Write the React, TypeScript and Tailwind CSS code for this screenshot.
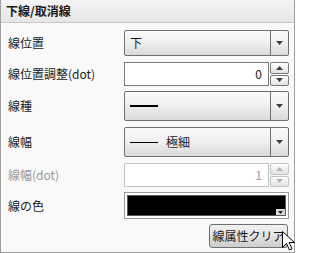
import React from "react";

const font = { fontFamily: '"Noto Sans CJK JP", "Noto Sans", sans-serif' };

function Arrow({ light = false, up = false }: { light?: boolean; up?: boolean }) {
  return (
    <svg width="7" height="4" viewBox="0 0 7 4" className={up ? "rotate-180" : ""}>
      <path d="M0 0h7L3.5 4z" fill={light ? "#b4b4b4" : "#3c3c3c"} />
    </svg>
  );
}

function Select({ h, children }: { h: string; children?: React.ReactNode }) {
  return (
    <div
      className={`flex w-[165px] ${h} rounded-[2px] border border-[#707070] bg-gradient-to-b from-[#fafafa] via-[#efefef] to-[#d9d9d9]`}
    >
      <div className="flex flex-1 items-center gap-[8px] px-[5px] text-[12px] text-[#1a1a1a]">{children}</div>
      <div className="flex w-[18px] items-center justify-center border-l border-[#707070]">
        <Arrow />
      </div>
    </div>
  );
}

function Spin({ value, disabled = false }: { value: string; disabled?: boolean }) {
  const border = disabled ? "border-[#c4c4c4]" : "border-[#7a7a7a]";
  return (
    <div className="flex h-[24px] w-[165px] gap-[1px]">
      <div
        className={`flex flex-1 items-center justify-end border ${border} bg-white pr-[6px] text-[12px] ${
          disabled ? "text-[#9a9a9a]" : "text-[#1a1a1a]"
        }`}
      >
        {value}
      </div>
      <div className="flex w-[19px] flex-col gap-[1px]">
        <div
          className={`flex flex-1 items-center justify-center rounded-[2px] border ${border} bg-gradient-to-b from-white to-[#e2e2e2]`}
        >
          <Arrow light={disabled} up />
        </div>
        <div
          className={`flex flex-1 items-center justify-center rounded-[2px] border ${border} bg-gradient-to-b from-white to-[#e2e2e2]`}
        >
          <Arrow light={disabled} />
        </div>
      </div>
    </div>
  );
}

function Row({ label, disabled = false, mt, children }: { label: string; disabled?: boolean; mt: string; children: React.ReactNode }) {
  return (
    <div className={`flex items-center ${mt}`}>
      <div className={`w-[116px] text-[12px] leading-none ${disabled ? "text-[#9a9a9a]" : "text-[#1a1a1a]"}`}>{label}</div>
      {children}
    </div>
  );
}

export default function App() {
  return (
    <div className="relative h-[253px] w-[297px] bg-white" style={font}>
      <div className="flex h-[253px] w-[295px] flex-col border border-t-0 border-[#a0a0a0] bg-[#f8f9f8]">
        <div className="flex h-[23px] items-center border-b border-[#c8c8c8] bg-gradient-to-b from-[#f4f4f4] to-[#e6e6e6] pl-[5px] text-[12px] font-bold text-[#1a1a1a]">
          下線/取消線
        </div>
        <div className="flex flex-col pl-[7px]">
          <Row label="線位置" mt="mt-[7px]">
            <Select h="h-[26px]">
              <span>下</span>
            </Select>
          </Row>
          <Row label="線位置調整(dot)" mt="mt-[6px]">
            <Spin value="0" />
          </Row>
          <Row label="線種" mt="mt-[5px]">
            <Select h="h-[30px]">
              <span className="h-[2px] w-[28px] bg-black" />
            </Select>
          </Row>
          <Row label="線幅" mt="mt-[6px]">
            <Select h="h-[30px]">
              <span className="h-[1px] w-[28px] bg-black" />
              <span>極細</span>
            </Select>
          </Row>
          <Row label="線幅(dot)" disabled mt="mt-[6px]">
            <Spin value="1" disabled />
          </Row>
          <Row label="線の色" mt="mt-[5px]">
            <div className="h-[27px] w-[165px] border border-[#9a9a9a] bg-white p-[2px]">
              <div className="relative h-full w-full border border-[#5a5a5a] bg-black">
                <div className="absolute bottom-0 right-0 flex h-[6px] w-[9px] items-center justify-center bg-[#d8d8d8]">
                  <svg width="5" height="3" viewBox="0 0 5 3">
                    <path d="M0 0h5L2.5 3z" fill="#222" />
                  </svg>
                </div>
              </div>
            </div>
          </Row>
          <div className="mt-[5px] flex justify-end pr-[6px]">
            <button className="h-[24px] w-[79px] rounded-[3px] border border-[#707070] bg-gradient-to-b from-[#f2f2f2] via-[#e2e2e2] to-[#cdcdcd] text-[12px] text-[#1a1a1a]">
              線属性クリア
            </button>
          </div>
        </div>
      </div>
      <svg className="absolute left-[282px] top-[231px]" width="13" height="20" viewBox="0 0 13 20">
        <path d="M0.5 0.5v16l4-4 3 6.5 2.5-1.2-3-6.3h5.5z" fill="#fff" stroke="#000" strokeWidth="1" strokeLinejoin="round" />
      </svg>
    </div>
  );
}
